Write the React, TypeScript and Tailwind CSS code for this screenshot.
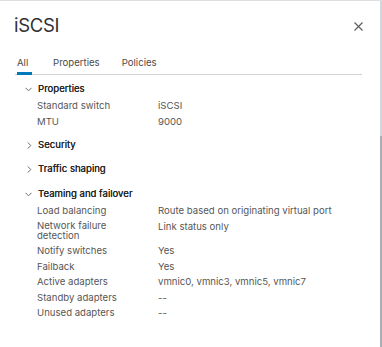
import React from "react";

type Row = { label: string; value: string; wrap?: boolean };

const sections: { title: string; open: boolean; rows: Row[] }[] = [
  {
    title: "Properties",
    open: true,
    rows: [
      { label: "Standard switch", value: "iSCSI" },
      { label: "MTU", value: "9000" },
    ],
  },
  { title: "Security", open: false, rows: [] },
  { title: "Traffic shaping", open: false, rows: [] },
  {
    title: "Teaming and failover",
    open: true,
    rows: [
      { label: "Load balancing", value: "Route based on originating virtual port" },
      { label: "Network failure detection", value: "Link status only", wrap: true },
      { label: "Notify switches", value: "Yes" },
      { label: "Failback", value: "Yes" },
      { label: "Active adapters", value: "vmnic0, vmnic3, vmnic5, vmnic7" },
      { label: "Standby adapters", value: "--" },
      { label: "Unused adapters", value: "--" },
    ],
  },
];

function Chevron({ open }: { open: boolean }) {
  return open ? (
    <svg width="7" height="5" viewBox="0 0 7 5" className="ml-[25px] mr-[6px]">
      <path d="M0.5 0.8 L3.5 3.8 L6.5 0.8" fill="none" stroke="#6a6a6a" strokeWidth="1" />
    </svg>
  ) : (
    <svg width="5" height="7" viewBox="0 0 5 7" className="ml-[27px] mr-[6px]">
      <path d="M0.8 0.5 L3.8 3.5 L0.8 6.5" fill="none" stroke="#6a6a6a" strokeWidth="1" />
    </svg>
  );
}

export default function App() {
  return (
    <div
      className="w-[382px] h-[347px] flex bg-white border-t border-[#dde0e3] overflow-hidden"
      style={{ fontFamily: "Inter, 'Noto Sans', sans-serif" }}
    >
      <div className="flex-1 flex flex-col">
        <div className="flex items-start justify-between pl-[14px] pr-[17px] pt-[13px]">
          <h1 className="text-[18.5px] leading-[22px] text-[#313131] font-normal tracking-[-0.3px]">iSCSI</h1>
          <svg width="9" height="9" viewBox="0 0 9 9" className="mt-[8px]">
            <path d="M0.5 0.5 L8.5 8.5 M8.5 0.5 L0.5 8.5" stroke="#5c5c5c" strokeWidth="1.1" />
          </svg>
        </div>
        <div className="mt-[20px] mx-[15px] w-[347px] flex border-b border-[#cfd3d6] text-[9.6px] text-[#4a4a4a]">
          <div className="ml-[2px] w-[15px] border-b-[3px] border-[#0079b8] pb-[2px] -mb-px leading-[14px]">All</div>
          <div className="ml-[21px] pb-[2px] leading-[14px]">Properties</div>
          <div className="ml-[22px] pb-[2px] leading-[14px]">Policies</div>
        </div>
        <div className="mt-[6px] flex flex-col text-[9.6px] text-[#565656]">
          {sections.map((s, i) => (
            <div key={s.title} className={i === 0 ? "" : "mt-[7.5px]"}>
              <div className="flex items-center h-[17px] text-[#262626] font-normal">
                <Chevron open={s.open} />
                <span className="[text-shadow:0_0_0.3px_#262626]">{s.title}</span>
              </div>
              {s.open &&
                s.rows.map((r) => (
                  <div
                    key={r.label}
                    className={"flex pl-[37px] leading-[11px] " + (r.wrap ? "py-[2.5px]" : "py-[2.25px]")}
                  >
                    <div className={"w-[121px] " + (r.wrap ? "leading-[10px] pr-[40px]" : "")}>{r.label}</div>
                    <div>{r.value}</div>
                  </div>
                ))}
            </div>
          ))}
        </div>
      </div>
      <div className="w-[2px] flex flex-col">
        <div className="h-[135px] bg-[#d3d6da]" />
        <div className="flex-1 bg-[#a9aeb3]" />
      </div>
    </div>
  );
}
